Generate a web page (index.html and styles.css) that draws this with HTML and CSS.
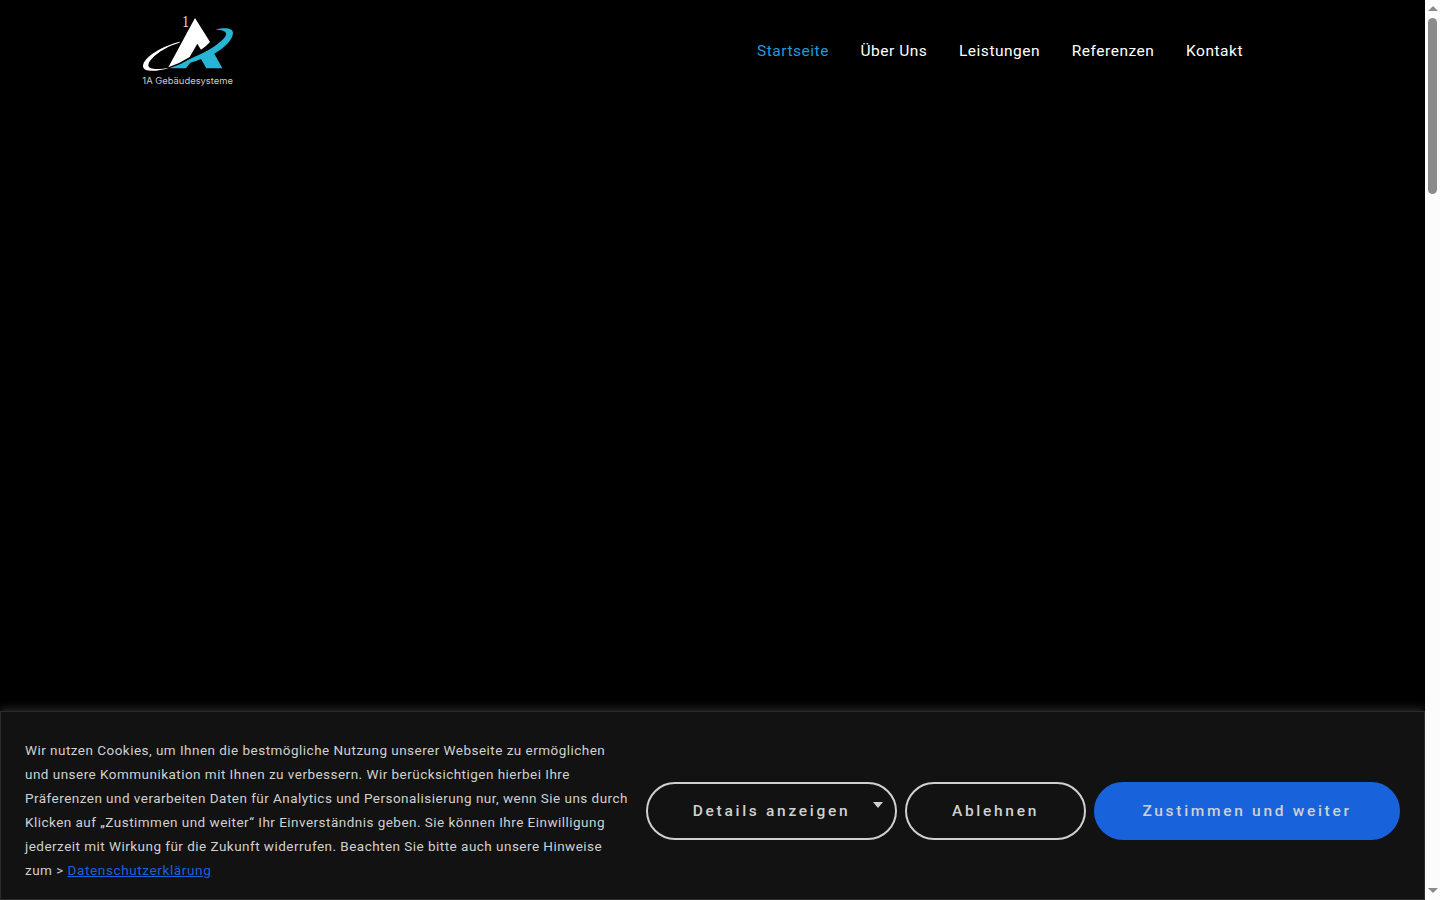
FILE: index.html
```html
<!DOCTYPE html>
<html lang="de">
<head>
    <meta charset="UTF-8">
    <meta name="viewport" content="width=device-width, initial-scale=1.0">
    <title>1A Gebäudesysteme</title>
    <link rel="stylesheet" href="styles.css">
</head>
<body>
    <div class="page">
        <header class="header">
            <a class="logo" href="#">
                <svg width="120" height="90" viewBox="0 0 360 270">
                    <text class="logo-one" x="157" y="67" textLength="20" lengthAdjust="spacingAndGlyphs">1</text>
                    <!-- white orbit, left side -->
                    <path fill="#fff" d="M150 110C98 122 42 155 39 182C38 201 76 202 118 188C84 195 54 194 55 180C58 159 102 126 148 113Z"/>
                    <!-- white half of the A -->
                    <path fill="#fff" d="M195 39L240 111Q228 125 213 134L202 116L179 156Q150 175 115 187Z"/>
                    <!-- blue half with the swoosh -->
                    <path fill="#27b5d5" d="M257 74C287 66 309 70 309 84C308 105 284 128 253 146L277 190H229L213 162Q198 169 181 173L168 190H118Q152 179 181 161C217 147 251 129 276 106C298 86 291 75 257 74Z"/>
                    <text class="logo-text" x="37" y="237" textLength="272" lengthAdjust="spacingAndGlyphs">1A Gebäudesysteme</text>
                </svg>
            </a>
            <nav class="nav">
                <a class="active" href="#">Startseite</a>
                <a href="#">Über Uns</a>
                <a href="#">Leistungen</a>
                <a href="#">Referenzen</a>
                <a href="#">Kontakt</a>
            </nav>
        </header>
        <main class="hero"></main>
        <div class="cookie-bar">
            <p class="cookie-text">
                Wir nutzen Cookies, um Ihnen die bestmögliche Nutzung unserer Webseite zu ermöglichen<br>
                und unsere Kommunikation mit Ihnen zu verbessern. Wir berücksichtigen hierbei Ihre<br>
                Präferenzen und verarbeiten Daten für Analytics und Personalisierung nur, wenn Sie uns durch<br>
                Klicken auf „Zustimmen und weiter“ Ihr Einverständnis geben. Sie können Ihre Einwilligung<br>
                jederzeit mit Wirkung für die Zukunft widerrufen. Beachten Sie bitte auch unsere Hinweise<br>
                zum &gt; <a href="#">Datenschutzerklärung</a>
            </p>
            <div class="cookie-buttons">
                <button class="btn btn-details">Details anzeigen<span class="caret"></span></button>
                <button class="btn btn-reject">Ablehnen</button>
                <button class="btn btn-accept">Zustimmen und weiter</button>
            </div>
        </div>
    </div>
    <div class="scrollbar">
        <span class="arrow arrow-up"></span>
        <span class="thumb"></span>
        <span class="arrow arrow-down"></span>
    </div>
</body>
</html>
```
FILE: styles.css
```css
* {
    box-sizing: border-box;
}

body {
    margin: 0;
    height: 900px;
    display: flex;
    overflow: hidden;
    background: #000;
    font-family: Roboto, "Liberation Sans", sans-serif;
}

.page {
    width: 1425px;
    height: 900px;
    display: flex;
    flex-direction: column;
}

.header {
    display: flex;
    justify-content: space-between;
    padding: 5px 182px 0 130px;
}

.logo svg {
    display: block;
}

.logo-one {
    font-family: "Liberation Serif", serif;
    font-size: 48px;
    fill: #ddd;
}

.logo-text {
    font-family: Inter, sans-serif;
    font-size: 26px;
    fill: #ccc;
}

.nav {
    display: flex;
    gap: 31.6px;
    padding-top: 34px;
}

.nav a {
    color: #fff;
    font-size: 15.5px;
    line-height: 24px;
    letter-spacing: 0.52px;
    text-decoration: none;
}

.nav .active {
    color: #1e9bd7;
}

.hero {
    flex: 1;
}

.cookie-bar {
    height: 189px;
    display: flex;
    align-items: center;
    justify-content: space-between;
    padding: 10px 24px 0;
    background: #121212;
    border: 1px solid #2b2b2b;
    box-shadow: 0 -1px 10px rgba(172, 171, 171, 0.3);
}

.cookie-text {
    margin: 0;
    padding-bottom: 2px;
    color: #d0d0d0;
    font-size: 13.5px;
    line-height: 24px;
    letter-spacing: 0.47px;
    white-space: nowrap;
}

.cookie-text a {
    color: #1863dc;
    letter-spacing: 0.62px;
}

.cookie-buttons {
    display: flex;
    gap: 8px;
}

.btn {
    position: relative;
    height: 58px;
    padding: 0;
    border: 2px solid #d0d0d0;
    border-radius: 29px;
    background: transparent;
    color: #d0d0d0;
    font-family: inherit;
    font-size: 15.5px;
    font-weight: 500;
    letter-spacing: 2.7px;
    cursor: pointer;
}

.btn-details {
    width: 251px;
}

.btn-reject {
    width: 181px;
}

.btn-accept {
    width: 306px;
    background: #1863dc;
    border-color: #1863dc;
}

.caret {
    position: absolute;
    top: 18px;
    right: 12px;
    border: 5px solid transparent;
    border-top: 6px solid #d0d0d0;
    border-bottom: 0;
}

.scrollbar {
    width: 15px;
    height: 900px;
    display: flex;
    flex-direction: column;
    align-items: center;
    padding: 6px 0 7px;
    background: #fcfcfc;
}

.arrow {
    border: 5px solid transparent;
}

.arrow-up {
    border-top: 0;
    border-bottom-color: #8b8b8b;
}

.arrow-down {
    margin-top: auto;
    border-bottom: 0;
    border-top-color: #8b8b8b;
}

.thumb {
    width: 9px;
    height: 176px;
    margin-top: 7px;
    border-radius: 5px;
    background: #8b8b8b;
}
```
